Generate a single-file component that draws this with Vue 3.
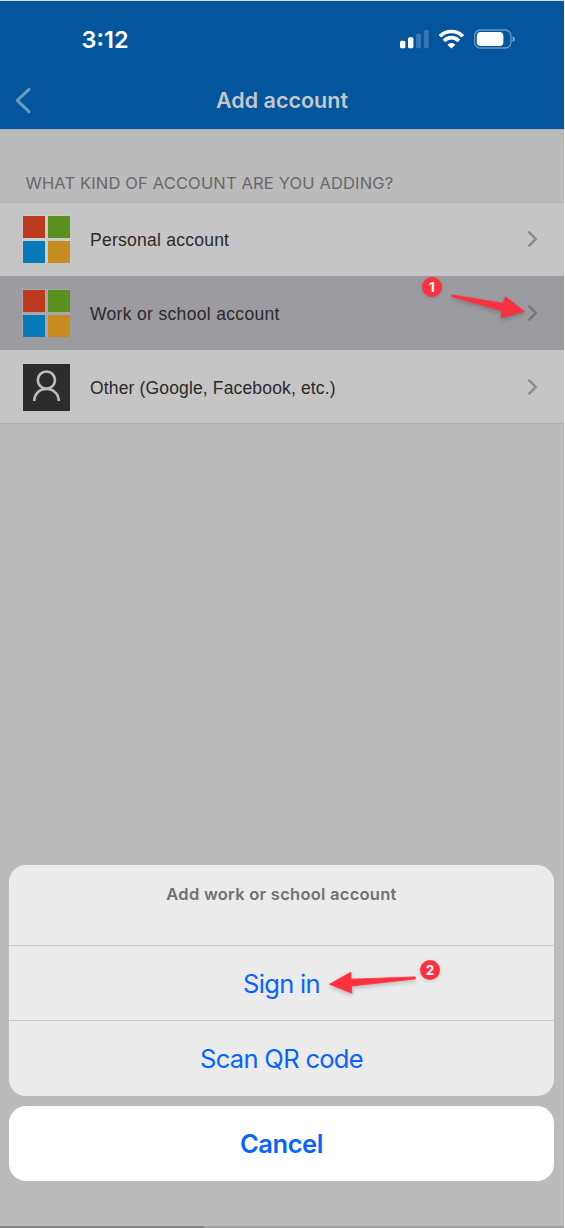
<script setup>
const accounts = [
  { label: 'Personal account', kind: 'ms', cls: 'personal' },
  { label: 'Work or school account', kind: 'ms', cls: 'work' },
  { label: 'Other (Google, Facebook, etc.)', kind: 'person', cls: 'other' },
]
</script>

<template>
  <div class="screen">
    <header class="top">
      <div class="status">
        <span class="time">3:12</span>
        <svg class="indicators" width="116" height="22" viewBox="0 0 116 22">
          <g fill="#fff">
            <rect x="0" y="11.7" width="5.4" height="7.5" rx="1.5" />
            <rect x="8" y="8.2" width="5.4" height="11" rx="1.5" />
            <rect x="16" y="4.6" width="5" height="14.6" rx="1.5" opacity=".2" />
            <rect x="23.8" y="1" width="5" height="18.2" rx="1.5" opacity=".2" />
          </g>
          <g fill="none" stroke="#fff" stroke-width="3.7">
            <path d="M39.9 7.3a16.2 16.2 0 0 1 23 0" />
            <path d="M44 11.9a10.2 10.2 0 0 1 14.8 0" />
          </g>
          <path d="M47.4 15.7a5.6 5.6 0 0 1 8 0l-3.3 3.3q-.7.7-1.4 0z" fill="#fff" />
          <rect x="74.6" y="1" width="36.4" height="18" rx="5.8" fill="none" stroke="#fff" stroke-opacity=".4" stroke-width="1.3" />
          <rect x="76.8" y="3.1" width="26.6" height="13.8" rx="4" fill="#fff" />
          <path d="M112.6 7.2c3 1 3 4.8 0 5.8z" fill="#fff" opacity=".5" />
        </svg>
      </div>
      <div class="nav">
        <svg class="back" width="20" height="30" viewBox="0 0 20 30">
          <path d="M15 4.3 3.2 15.3 15 26.7" fill="none" stroke="#6c9bbd" stroke-width="3" stroke-linecap="round" stroke-linejoin="round" />
        </svg>
        <h1><span>Add account</span></h1>
      </div>
    </header>

    <main class="content">
      <h2><span>WHAT KIND OF ACCOUNT ARE YOU ADDING?</span></h2>
      <ul class="list">
        <li v-for="a in accounts" :key="a.label" :class="['row', a.cls]">
          <svg v-if="a.kind === 'ms'" width="48" height="48" viewBox="0 0 48 48">
            <path fill="#fff" opacity=".12" d="M0 0h48v48H0z" />
            <path fill="#bc3a20" d="M1 1h22v22H1z" />
            <path fill="#5a901d" d="M26 1h22v22H26z" />
            <path fill="#0879b9" d="M1 26h22v22H1z" />
            <path fill="#c78c20" d="M26 26h22v22H26z" />
          </svg>
          <svg v-else width="48" height="48" viewBox="0 0 48 48">
            <path fill="#2c2c2c" d="M1 1h47v47H1z" />
            <g fill="none" stroke="#bdbdbd" stroke-width="2.6">
              <circle cx="24.4" cy="17.1" r="8.6" />
              <path d="M12.2 38C12.4 31 17.2 25.9 24.4 25.9S36.6 31 36.8 38" />
            </g>
          </svg>
          <span class="label">{{ a.label }}</span>
          <svg class="chev" width="14" height="20" viewBox="0 0 14 20">
            <path d="m3.2 3.3 6.6 6.7-6.6 6.7" fill="none" stroke="currentColor" stroke-width="2.4" stroke-linecap="round" />
          </svg>
        </li>
      </ul>
    </main>

    <section class="sheet">
      <div class="group">
        <p class="title"><span>Add work or school account</span></p>
        <button class="signin"><span>Sign in</span></button>
        <button class="scan"><span>Scan QR code</span></button>
      </div>
      <button class="cancel"><span>Cancel</span></button>
    </section>
    <footer class="progress"><i></i></footer>

    <svg class="arrow first" width="90" height="40" viewBox="445 285 90 40">
      <path d="M452.2 295 503 303.3 505.5 296.8 524.5 311.5 501 317.8 502 310.8 452 296.8Q451 295.3 452.2 295Z" fill="#fb3140" stroke="#fb3140" stroke-width=".8" stroke-linejoin="round" />
    </svg>
    <b class="marker one">1</b>
    <svg class="arrow second" width="100" height="36" viewBox="322 966 100 36">
      <path d="M329.5 984.2 350.8 972.2 351 979.2 415 976.9Q416.7 978 415 979L351.2 986 352 993.3Z" fill="#fb3140" stroke="#fb3140" stroke-width=".8" stroke-linejoin="round" />
    </svg>
    <b class="marker two">2</b>
  </div>
</template>

<style>
html, body { margin: 0; background: #fff; }
</style>
<style scoped>
* { box-sizing: border-box; }
.screen {
  position: relative; width: 564px; height: 1228px; overflow: hidden;
  display: flex; flex-direction: column; background: #bbb;
  border-top: 1px solid #d9dde0;
  font-family: Inter, "Liberation Sans", sans-serif;
}
.top { height: 129px; flex: none; background: #03559d; border-bottom: 1px solid #a7b4c2; }
.status { height: 76px; display: flex; justify-content: space-between; padding: 2px 48px 0 81.5px; align-items: center; }
.time { color: #fff; font-size: 23.5px; font-weight: 600; line-height: 30px; }
.indicators { margin-top: -1px; }
.nav { height: 46px; display: grid; grid-template-columns: 36px 1fr 36px; align-items: center; }
.back { margin-left: 14px; }
h1 { margin: 0; text-align: center; color: #c5c7c9; font-size: 21.5px; font-weight: 600; line-height: 30px; }
.content { flex: 1; }
h2 { margin: 0; height: 72px; padding: 40px 0 0 25.5px; font-size: 16.5px; line-height: 26px; font-weight: 400; color: #686868; white-space: nowrap; letter-spacing: .15px; }
.list { list-style: none; margin: 0; padding: 0; border-top: 1px solid #b0b0b0; border-bottom: 1px solid #b0b0b0; }
.row { height: 74px; display: flex; align-items: center; padding: 0 24px 0 22px; background: #c5c5c5; color: #2a2a2a; }
.row.personal { height: 73px; padding-bottom: 1px; }
.row.other { height: 73px; }
.work { background: #9c9ba0; }
.label { flex: 1; margin-left: 20px; padding-top: 2px; font: 17.5px/24px "Liberation Sans", Arial, sans-serif; white-space: nowrap; }
.personal .label { letter-spacing: .25px; }
.work .label { letter-spacing: .33px; }
.other .label { letter-spacing: .15px; }
.chev { color: #8a8a8c; }
.work .chev { color: #77777b; }
.sheet { width: 545px; margin-left: 9px; flex: none; }
.group { height: 231px; border-radius: 17px; background: #ebebeb; overflow: hidden; margin-bottom: 10px; }
.title { margin: 0; height: 80px; padding-top: 16px; text-align: center; color: #717171; font-size: 16.5px; line-height: 26px; font-weight: 600; letter-spacing: .27px; }
button { display: block; width: 100%; height: 75px; margin: 0; padding: 1px 0 0; border: 0; background: #ebebeb; color: #0864ff; font: 400 25.5px/36px Inter, sans-serif; text-align: center; letter-spacing: -.68px; }
.group button { border-top: 1px solid #cbcbcb; }
.cancel { background: #fff; border-radius: 17px; font-weight: 600; letter-spacing: -.45px; }
.progress { flex: none; height: 2px; margin-top: 45px; background: #a0a0a0; }
.progress i { display: block; width: 204px; height: 2px; background: #858585; }
.arrow { position: absolute; filter: drop-shadow(0 2px 2px rgba(0, 0, 0, .22)); }
.first { left: 445px; top: 284px; }
.second { left: 322px; top: 965px; }
.marker { position: absolute; width: 20px; height: 20px; border-radius: 50%; background: #fb3140; color: #fff; font: 700 13.5px/20px Inter, sans-serif; text-align: center; box-shadow: 0 1px 4px rgba(0, 0, 0, .15); }
.one { left: 422px; top: 276px; }
.two { left: 420px; top: 959px; }
</style>
